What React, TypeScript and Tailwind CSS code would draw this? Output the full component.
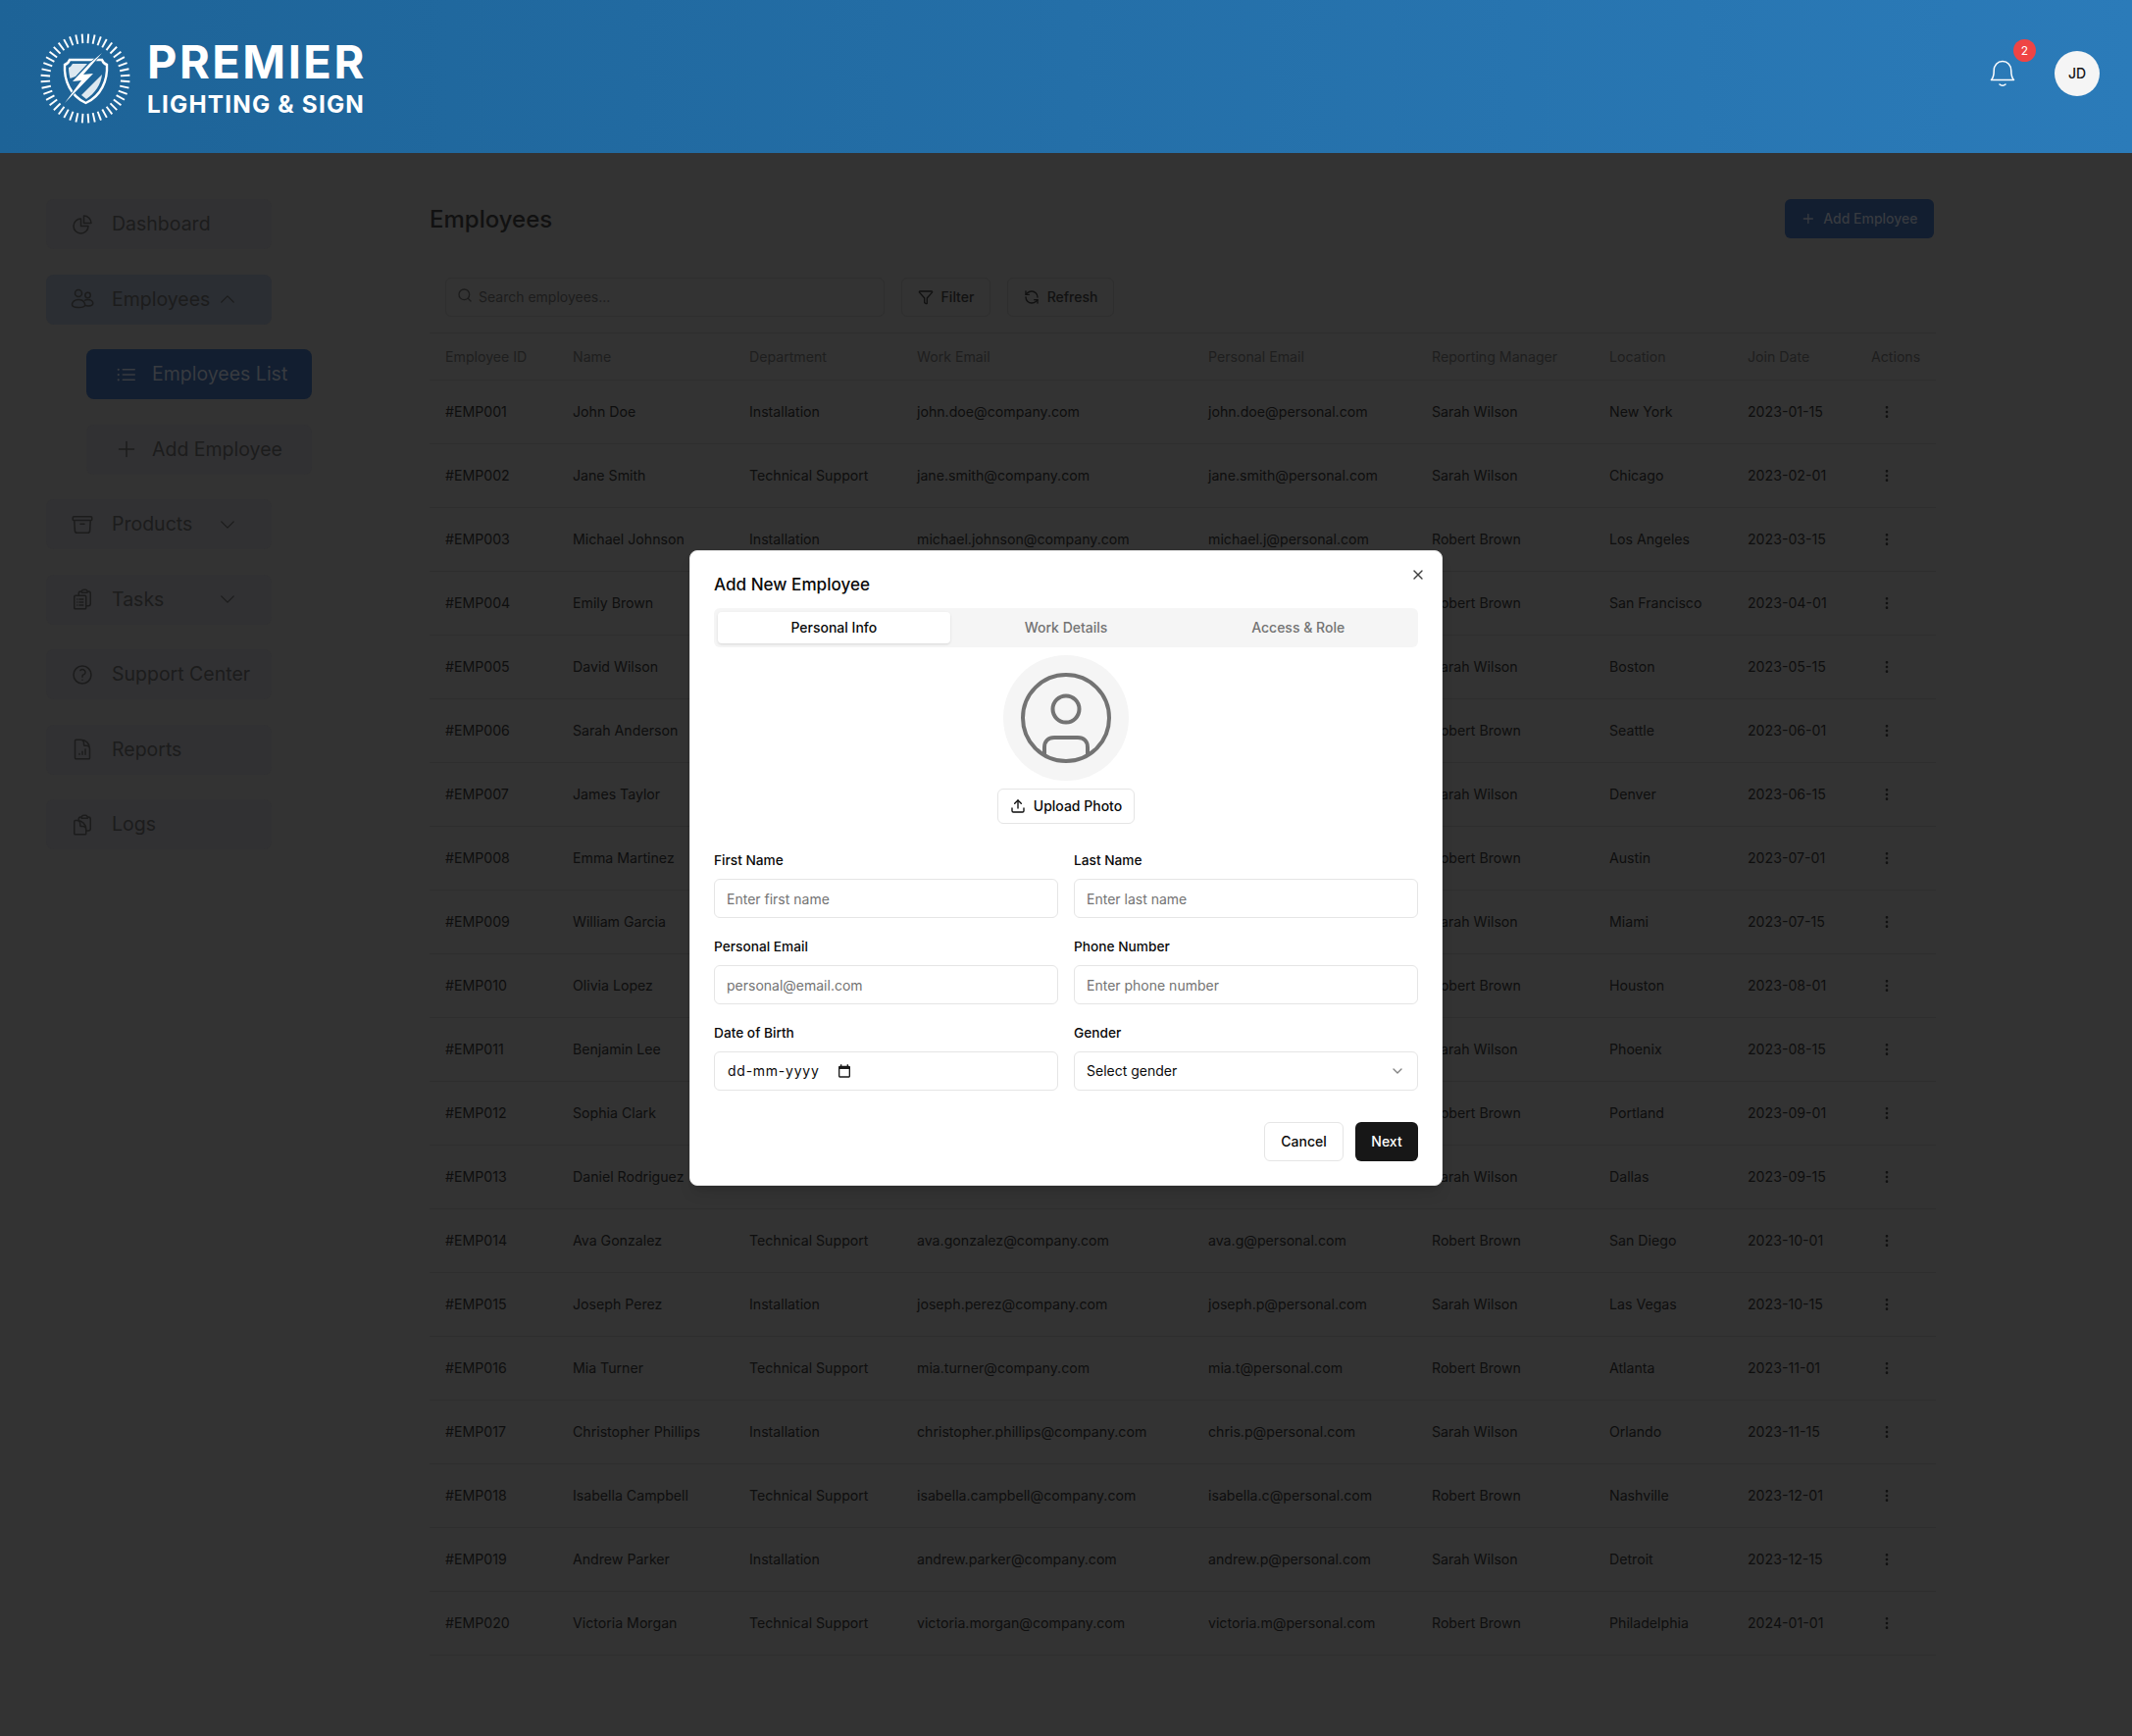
import React from "react";
import { Search, Filter, RefreshCcw, EllipsisVertical, Plus, X, Upload, ChevronDown } from "lucide-react";
import {
  HiOutlineChartPie,
  HiOutlineArchiveBox,
  HiOutlineClipboardDocumentList,
  HiOutlineQuestionMarkCircle,
  HiOutlineDocumentChartBar,
  HiOutlineClipboardDocument,
  HiOutlineListBullet,
  HiOutlinePlus,
  HiOutlineChevronUp,
  HiOutlineChevronDown,
} from "react-icons/hi2";

const SW = "Sarah Wilson";
const RB = "Robert Brown";
const IN = "Installation";
const TS = "Technical Support";

const rows: string[][] = [
  ["#EMP001", "John Doe", IN, "john.doe@company.com", "john.doe@personal.com", SW, "New York", "2023-01-15"],
  ["#EMP002", "Jane Smith", TS, "jane.smith@company.com", "jane.smith@personal.com", SW, "Chicago", "2023-02-01"],
  ["#EMP003", "Michael Johnson", IN, "michael.johnson@company.com", "michael.j@personal.com", RB, "Los Angeles", "2023-03-15"],
  ["#EMP004", "Emily Brown", "", "", "", RB, "San Francisco", "2023-04-01"],
  ["#EMP005", "David Wilson", "", "", "", SW, "Boston", "2023-05-15"],
  ["#EMP006", "Sarah Anderson", "", "", "", RB, "Seattle", "2023-06-01"],
  ["#EMP007", "James Taylor", "", "", "", SW, "Denver", "2023-06-15"],
  ["#EMP008", "Emma Martinez", "", "", "", RB, "Austin", "2023-07-01"],
  ["#EMP009", "William Garcia", "", "", "", SW, "Miami", "2023-07-15"],
  ["#EMP010", "Olivia Lopez", "", "", "", RB, "Houston", "2023-08-01"],
  ["#EMP011", "Benjamin Lee", "", "", "", SW, "Phoenix", "2023-08-15"],
  ["#EMP012", "Sophia Clark", "", "", "", RB, "Portland", "2023-09-01"],
  ["#EMP013", "Daniel Rodriguez", "", "", "", SW, "Dallas", "2023-09-15"],
  ["#EMP014", "Ava Gonzalez", TS, "ava.gonzalez@company.com", "ava.g@personal.com", RB, "San Diego", "2023-10-01"],
  ["#EMP015", "Joseph Perez", IN, "joseph.perez@company.com", "joseph.p@personal.com", SW, "Las Vegas", "2023-10-15"],
  ["#EMP016", "Mia Turner", TS, "mia.turner@company.com", "mia.t@personal.com", RB, "Atlanta", "2023-11-01"],
  ["#EMP017", "Christopher Phillips", IN, "christopher.phillips@company.com", "chris.p@personal.com", SW, "Orlando", "2023-11-15"],
  ["#EMP018", "Isabella Campbell", TS, "isabella.campbell@company.com", "isabella.c@personal.com", RB, "Nashville", "2023-12-01"],
  ["#EMP019", "Andrew Parker", IN, "andrew.parker@company.com", "andrew.p@personal.com", SW, "Detroit", "2023-12-15"],
  ["#EMP020", "Victoria Morgan", TS, "victoria.morgan@company.com", "victoria.m@personal.com", RB, "Philadelphia", "2024-01-01"],
];

const heads = ["Employee ID", "Name", "Department", "Work Email", "Personal Email", "Reporting Manager", "Location", "Join Date", "Actions"];

function Logo() {
  const ticks = Array.from({ length: 44 }, (_, i) => (i * 2 * Math.PI) / 44 + 0.07);
  return (
    <svg width="92" height="92" viewBox="0 0 92 92" className="mt-[3px] shrink-0">
      {ticks.map((a, i) => (
        <line
          key={i}
          x1={46 + 36 * Math.cos(a)}
          y1={46 + 36 * Math.sin(a)}
          x2={46 + 45.5 * Math.cos(a)}
          y2={46 + 45.5 * Math.sin(a)}
          stroke="#fff"
          strokeWidth="1.9"
        />
      ))}
      <path
        d="M30 27L63 27Q64.5 31 68 32C69 48 62 64 46.5 71C31 64 24 48 25 32Q28.5 31 30 27Z"
        fill="none"
        stroke="#fff"
        strokeWidth="2.4"
      />
      <path d="M33 31L48 31L36 44L30.5 46C29.5 42 29 38 29 35Q31.5 34 33 31Z" fill="#fff" opacity="0.85" />
      <path d="M63 42C62 52 56 61 47 67L42 63Z" fill="#fff" opacity="0.85" />
      <path d="M63 20L44 42L54 41L25 71L42 48L33 49L50 31Z" fill="#fff" stroke="#1e6598" strokeWidth="1.4" paintOrder="stroke" />
    </svg>
  );
}

function UsersGlyph() {
  return (
    <svg width="24" height="24" viewBox="0 0 24 24" fill="none" stroke="currentColor" strokeWidth="1.5" className="shrink-0">
      <circle cx="8" cy="6" r="3.5" />
      <circle cx="17.5" cy="8" r="2.7" />
      <path d="M1.5 17.5C1.5 14.5 4.5 12.5 8 12.5C10.5 12.5 13 13.6 14 15.5C14.6 16.6 14.8 18 14.5 18.6C13.5 20 11 20.5 8 20.5C4 20.5 1.5 19.5 1.5 17.5Z" />
      <path d="M14 13.5C15 12.8 16.2 12.6 17.5 12.6C20.5 12.6 22.8 14.2 22.8 16.3C22.8 18 20.5 18.9 18 18.9C16.8 18.9 15.8 18.8 14.8 18.4" />
    </svg>
  );
}

function NavItem({
  icon,
  label,
  chevron,
  active,
}: {
  icon: React.ReactNode;
  label: string;
  chevron?: "up" | "down";
  active?: boolean;
}) {
  return (
    <div
      className={`flex h-[51px] w-[230px] items-center gap-[18px] rounded-lg pl-[25px] pr-[35px] text-[19.5px] whitespace-nowrap text-[#1c1c1c] ${
        active ? "bg-[#2b2e33]" : "bg-[#313133]"
      }`}
    >
      {icon}
      <span className="min-w-0 flex-1 pt-px">{label}</span>
      {chevron === "up" && <HiOutlineChevronUp className="size-5 shrink-0" />}
      {chevron === "down" && <HiOutlineChevronDown className="size-5 shrink-0" />}
    </div>
  );
}

function SubItem({ icon, label, active }: { icon: React.ReactNode; label: string; active?: boolean }) {
  return (
    <div
      className={`ml-[41px] flex h-[51px] w-[230px] items-center gap-[14px] rounded-lg pl-[29px] text-[19.5px] whitespace-nowrap ${
        active ? "bg-[#121e30] text-[#383b40]" : "bg-[#313133] text-[#1c1c1c]"
      }`}
    >
      {icon}
      <span className="pt-px">{label}</span>
    </div>
  );
}

function Field({ label, placeholder }: { label: string; placeholder: string }) {
  return (
    <label className="flex flex-col gap-[9px]">
      <span className="h-5 text-[13.7px] leading-5 font-medium text-[#0a0a0a]">{label}</span>
      <input
        placeholder={placeholder}
        className="h-10 w-full rounded-md border border-[#e5e5e5] bg-white px-3 text-sm text-[#0a0a0a] outline-none placeholder:text-[#737373]"
      />
    </label>
  );
}

export default function App() {
  const iconCls = "size-6 shrink-0";
  return (
    <div className="relative min-h-[1770px] bg-[#333333] font-['Inter',sans-serif] text-[#111111]">
      <header className="relative z-20 flex h-[156px] items-center justify-between bg-linear-to-r from-[#1d6397] to-[#2b7bb9] pl-[41px] pr-[33px]">
        <div className="flex items-center gap-[17px] text-white">
          <Logo />
          <div className="mt-[3px] flex flex-col items-start">
            <span className="text-[47px] leading-[52px] font-bold tracking-[2.5px]">PREMIER</span>
            <span className="mt-px text-[24.3px] leading-[32px] font-bold tracking-[1.2px]">LIGHTING &amp; SIGN</span>
          </div>
        </div>
        <div className="mb-[6px] flex items-center">
          <div className="relative mr-[40px] h-[28px] w-[26px]">
            <svg width="26" height="28" viewBox="0 0 26 28" fill="none" stroke="#fff" strokeWidth="1.5" strokeLinecap="round" strokeLinejoin="round">
              <path d="M1.5 20.5H24.5C22 18 21.8 15 21.8 11C21.8 5.5 18.2 1.5 13 1.5C7.8 1.5 4.2 5.5 4.2 11C4.2 15 4 18 1.5 20.5Z" />
              <path d="M10 25C11.5 26.6 14.5 26.6 16 25" />
            </svg>
            <span className="absolute top-[-21px] left-[24px] flex size-[23px] items-center justify-center rounded-full bg-[#ef4444] text-xs text-white">
              2
            </span>
          </div>
          <div className="flex size-[46px] items-center justify-center rounded-full bg-[#f5f5f5] text-sm font-medium text-[#171717]">JD</div>
        </div>
      </header>

      <div className="flex">
        <aside className="flex w-[438px] shrink-0 flex-col gap-[25.5px] pt-[47px] pl-[47px]">
          <NavItem icon={<HiOutlineChartPie className={iconCls} />} label="Dashboard" />
          <NavItem icon={<UsersGlyph />} label="Employees" chevron="up" active />
          <SubItem icon={<HiOutlineListBullet className={iconCls} />} label="Employees List" active />
          <SubItem icon={<HiOutlinePlus className={iconCls} />} label="Add Employee" />
          <NavItem icon={<HiOutlineArchiveBox className={iconCls} />} label="Products" chevron="down" />
          <NavItem icon={<HiOutlineClipboardDocumentList className={iconCls} />} label="Tasks" chevron="down" />
          <NavItem icon={<HiOutlineQuestionMarkCircle className={iconCls} />} label="Support Center" />
          <NavItem icon={<HiOutlineDocumentChartBar className={iconCls} />} label="Reports" />
          <NavItem icon={<HiOutlineClipboardDocument className={iconCls} />} label="Logs" />
        </aside>

        <main className="w-[1536px] shrink-0 pt-[47px]">
          <div className="flex items-start justify-between pr-[2.5px]">
            <h1 className="mt-[5px] text-2xl leading-8 font-medium text-[#111111]">Employees</h1>
            <button className="flex h-10 w-[152px] items-center gap-2 rounded-md bg-[#121e30] px-4 text-sm font-medium whitespace-nowrap text-[#383b40]">
              <Plus size={16} />
              Add Employee
            </button>
          </div>

          <div className="mt-10 flex gap-[17px] px-4">
            <div className="flex h-10 w-[448px] items-center gap-[6px] rounded-md border border-[#2e2e2e] pl-[11px] text-sm text-[#1c1c1c]">
              <Search size={16} className="mt-[-4px]" />
              <span>Search employees...</span>
            </div>
            <button className="flex h-10 w-[91px] items-center justify-center gap-2 rounded-md border border-[#2e2e2e] text-sm font-medium">
              <Filter size={16} />
              Filter
            </button>
            <button className="flex h-10 w-[109px] items-center justify-center gap-2 rounded-md border border-[#2e2e2e] text-sm font-medium">
              <RefreshCcw size={16} />
              Refresh
            </button>
          </div>

          <table className="mt-4 w-full table-fixed border-collapse text-left text-[14.15px]">
            <colgroup>
              <col className="w-[130px]" />
              <col className="w-[180px]" />
              <col className="w-[171px]" />
              <col className="w-[297px]" />
              <col className="w-[228px]" />
              <col className="w-[181px]" />
              <col className="w-[141px]" />
              <col className="w-[126px]" />
              <col className="w-[82px]" />
            </colgroup>
            <thead>
              <tr className="h-[48px] border-y border-[#2e2e2e]">
                {heads.map((h) => (
                  <th key={h} className="px-4 font-normal whitespace-nowrap text-[#1e1e1e]">
                    {h}
                  </th>
                ))}
              </tr>
            </thead>
            <tbody>
              {rows.map((r) => (
                <tr key={r[0]} className="h-[65px] border-b border-[#2e2e2e]">
                  {r.map((c, i) => (
                    <td key={i} className="px-4 whitespace-nowrap text-[#0e0e0e]">
                      {c}
                    </td>
                  ))}
                  <td className="px-4">
                    <div className="flex w-8 justify-center">
                      <EllipsisVertical size={16} />
                    </div>
                  </td>
                </tr>
              ))}
            </tbody>
          </table>
        </main>
      </div>

      <div className="absolute inset-0 z-10 flex items-center justify-center">
        <div className="relative h-[648px] w-[768px] rounded-lg border border-[#e5e5e5] bg-white p-6 text-[#0a0a0a] shadow-lg">
          <button className="absolute top-[16px] right-[16px] text-[#404040]">
            <X size={16} />
          </button>
          <h2 className="mb-[14px] h-5 text-[17.1px] leading-5 font-medium">Add New Employee</h2>
          <div className="grid h-10 grid-cols-3 rounded-md bg-[#f5f5f5] p-1 text-sm font-medium text-[#737373]">
            <div className="flex items-center justify-center rounded bg-white text-[#0a0a0a] shadow-sm">Personal Info</div>
            <div className="flex items-center justify-center">Work Details</div>
            <div className="flex items-center justify-center">Access &amp; Role</div>
          </div>
          <div className="mt-2 flex flex-col items-center gap-2">
            <div className="flex size-32 items-center justify-center rounded-full bg-[#f5f5f5]">
              <svg width="92" height="92" viewBox="0 0 92 92" fill="none" stroke="#737373" strokeWidth="4">
                <circle cx="46" cy="46" r="44" />
                <circle cx="46" cy="37" r="13.5" />
                <path d="M24 84V76C24 70 28 66 34 66H58C64 66 68 70 68 76V84" />
              </svg>
            </div>
            <button className="flex h-9 w-[140px] items-center justify-center gap-2 rounded-md border border-[#e5e5e5] bg-white text-sm font-medium">
              <Upload size={16} />
              Upload Photo
            </button>
          </div>
          <div className="mt-[27px] grid grid-cols-2 gap-x-4 gap-y-[19px]">
            <Field label="First Name" placeholder="Enter first name" />
            <Field label="Last Name" placeholder="Enter last name" />
            <Field label="Personal Email" placeholder="personal@email.com" />
            <Field label="Phone Number" placeholder="Enter phone number" />
            <div className="flex flex-col gap-[9px]">
              <span className="h-5 text-[13.7px] leading-5 font-medium">Date of Birth</span>
              <div className="flex h-10 items-center rounded-md border border-[#e5e5e5] bg-white pl-[13px] text-sm">
                <span className="tracking-[0.75px]">dd-mm-yyyy</span>
                <svg width="16" height="16" viewBox="0 0 24 24" className="ml-[17px]" fill="#1a1a1a">
                  <path d="M19 4h-1V2h-2v2H8V2H6v2H5a2 2 0 0 0-2 2v14a2 2 0 0 0 2 2h14a2 2 0 0 0 2-2V6a2 2 0 0 0-2-2zm0 16H5V9h14v11z" />
                </svg>
              </div>
            </div>
            <div className="flex flex-col gap-[9px]">
              <span className="h-5 text-[13.7px] leading-5 font-medium">Gender</span>
              <button className="flex h-10 items-center justify-between rounded-md border border-[#e5e5e5] bg-white px-3 text-sm">
                Select gender
                <ChevronDown size={16} className="opacity-50" />
              </button>
            </div>
          </div>
          <div className="mt-8 flex justify-end gap-3">
            <button className="h-10 w-[81px] rounded-md border border-[#e5e5e5] bg-white text-sm font-medium">Cancel</button>
            <button className="h-10 w-[64px] rounded-md bg-[#171717] text-sm font-medium text-white">Next</button>
          </div>
        </div>
      </div>
    </div>
  );
}
